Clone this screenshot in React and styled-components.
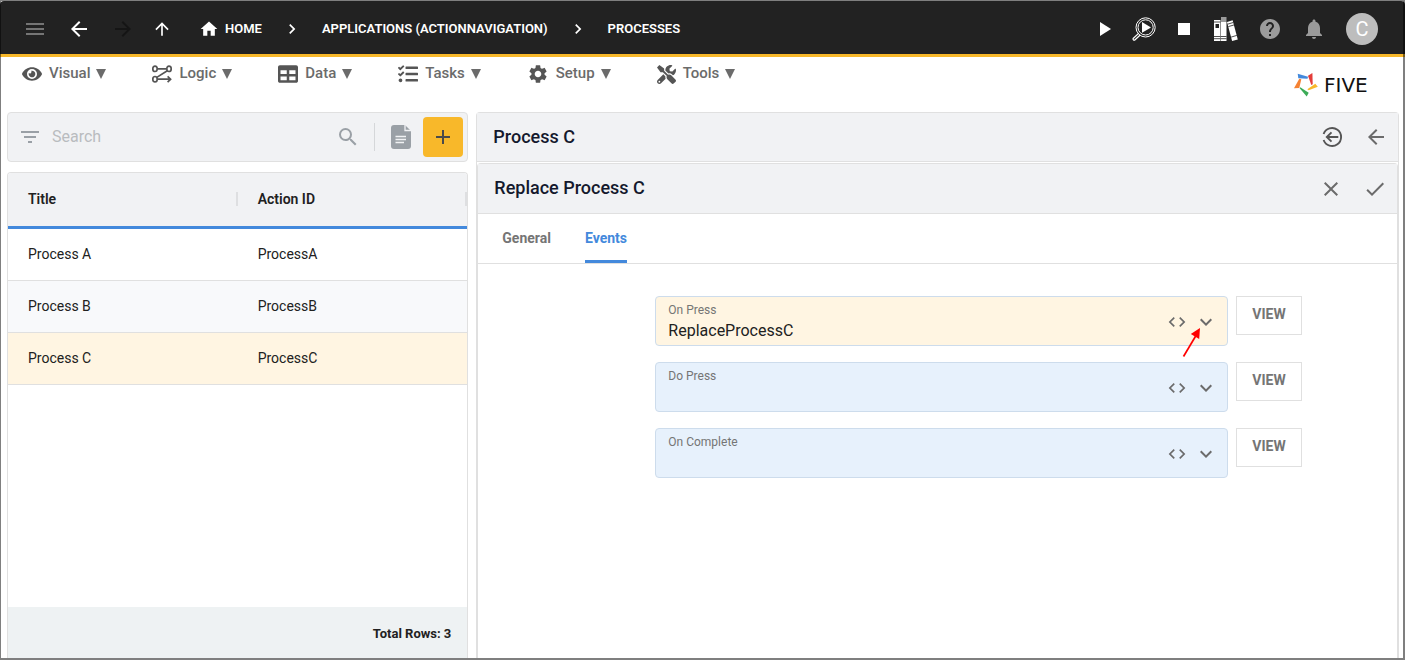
import React, { useState } from 'react';
import styled, { createGlobalStyle } from 'styled-components';
import {
    MdAdd,
    MdArrowBack,
    MdArrowForward,
    MdArrowUpward,
    MdCheck,
    MdChevronRight,
    MdClose,
    MdCode,
    MdExpandMore,
    MdFilterList,
    MdHelp,
    MdHome,
    MdMenu,
    MdNotifications,
    MdPlayArrow,
    MdSearch,
    MdSettings,
    MdStop,
} from 'react-icons/md';
import { FaEye, FaTable, FaTasks, FaTools } from 'react-icons/fa';

const processes = [
    { title: 'Process A', actionId: 'ProcessA' },
    { title: 'Process B', actionId: 'ProcessB' },
    { title: 'Process C', actionId: 'ProcessC' },
];

const events = [
    { id: 'onPress', label: 'On Press', value: 'ReplaceProcessC', pointer: true },
    { id: 'doPress', label: 'Do Press', value: '' },
    { id: 'onComplete', label: 'On Complete', value: '' },
];

const InspectIcon = () => (
    <svg width="24" height="24" viewBox="0 0 24 24" fill="none" stroke="#fff">
        <circle cx="13.6" cy="10.4" r="9.6" strokeWidth="1" />
        <circle cx="13.6" cy="10.4" r="7.6" strokeWidth="1" />
        <path d="M6.6 16.4l-5.2 4.8a1.2 1.2 0 0 0 0 1.6 1.2 1.2 0 0 0 1.7 0l5.1-4.8" strokeWidth="1.2" />
        <path d="M10 5v10.800l9-5.400z" fill="#fff" stroke="none" />
    </svg>
);

const BooksIcon = () => (
    <svg width="26" height="24" viewBox="0 0 26 24">
        <path d="M2 3h6.500v21H2z" fill="#fff" />
        <path d="M3.500 7H7v4H3.500z" fill="#222" />
        <path d="M2 5h6.500M2 19.500h6.500M2 21.700h6.500" stroke="#222" strokeWidth=".8" />
        <path d="M9 0h5.500v5H9z" fill="#9a9a9a" />
        <path d="M9 5h5.500v19H9z" fill="#fff" />
        <path d="M9 19.500h5.500M9 21.700h5.500" stroke="#222" strokeWidth=".8" />
        <path d="M15 5l5.600-1.800 5.200 19.200-5.700 1.600z" fill="#fff" />
        <path d="M15.500 7.200l5.700-1.700M16.300 9.600l5.600-1.600M19.100 20.100l5.700-1.700" stroke="#222" strokeWidth=".8" />
    </svg>
);

const LogicIcon = () => (
    <svg width="20" height="20" viewBox="0 0 20 20" fill="none" stroke="currentColor" strokeWidth="1.7">
        <ellipse cx="3" cy="4.8" rx="2.2" ry="2.7" />
        <ellipse cx="17" cy="4.8" rx="2.2" ry="2.7" />
        <ellipse cx="3" cy="15.2" rx="2.2" ry="2.7" />
        <path d="M5.200 4.800h9.600M15.300 6.700L4.800 13.400M5.200 15.200h13M15.600 12.300l3 2.900-3 2.900" />
    </svg>
);

const DocumentIcon = () => (
    <svg width="20" height="24" viewBox="0 0 20 24">
        <path d="M3 0h11l6 6v15a3 3 0 0 1-3 3H3a3 3 0 0 1-3-3V3a3 3 0 0 1 3-3z" fill="#9aa0a6" />
        <path d="M14 0v5.500h6" fill="none" stroke="#f1f2f4" strokeWidth="1.3" />
        <path d="M4.500 11.500h10.500M4.500 14.500h10.500M4.500 17.500h8.500" stroke="#f1f2f4" strokeWidth="1.3" />
    </svg>
);

const BackCircleIcon = () => (
    <svg width="24" height="24" viewBox="0 0 24 24" fill="none" stroke="#555" strokeWidth="1.9">
        <path d="M3.600 9a9 9 0 1 1 0 6" />
        <path d="M18.300 12H7M11.500 7.400L6.800 12l4.700 4.600" />
    </svg>
);

const StarLogo = () => (
    <svg width="24" height="24" viewBox="0 0 24 24">
        <path d="M3.700.7l.6 4.600 9.200.4.500-2z" fill="#4389dc" />
        <path d="M18.400 0L14 2.700 17.300 12l1.400-.7z" fill="#e43d3a" />
        <path d="M21.300 10.700l2.500 3-9.100 3.600-1.400-1z" fill="#f8b82a" />
        <path d="M6.300 14.300l8.400 5.400-2 3.700-7-8.100z" fill="#3cab57" />
        <path d="M5.300 5.700l2 .6-2 8.700-5.300.3z" fill="#f58233" />
    </svg>
);

const RedPointer = () => (
    <Pointer width="20" height="32" viewBox="0 0 20 32" aria-hidden="true">
        <path d="M1.500 29.500L14 8.500" stroke="#f00" strokeWidth="1.7" />
        <path d="M18 1L17.200 12 8.800 7z" fill="#f00" />
    </Pointer>
);

const menus = [
    { name: 'Visual', icon: <FaEye size={20} /> },
    { name: 'Logic', icon: <LogicIcon /> },
    { name: 'Data', icon: <FaTable size={20} /> },
    { name: 'Tasks', icon: <FaTasks size={20} /> },
    { name: 'Setup', icon: <MdSettings size={22} /> },
    { name: 'Tools', icon: <FaTools size={19} /> },
];

const EventField = ({ event }) => {
    const [value, setValue] = useState(event.value);
    return (
        <EventRow>
            <Field $filled={value !== ''}>
                <FieldText>
                    <FieldLabel htmlFor={event.id}>{event.label}</FieldLabel>
                    <FieldInput id={event.id} value={value} onChange={e => setValue(e.target.value)} />
                </FieldText>
                <IconButton type="button" aria-label="Edit code">
                    <MdCode size={20} />
                </IconButton>
                <IconButton type="button" aria-label="Open list">
                    <MdExpandMore size={24} />
                </IconButton>
                {event.pointer && <RedPointer />}
            </Field>
            <ViewButton type="button">VIEW</ViewButton>
        </EventRow>
    );
};

const App = () => {
    const [selected, setSelected] = useState('ProcessC');
    const [search, setSearch] = useState('');

    return (
        <Page>
            <GlobalStyle />
            <TopBar>
                <NavButtons>
                    <IconButton type="button" aria-label="Menu" $color="#757575"><MdMenu size={24} /></IconButton>
                    <IconButton type="button" aria-label="Back" $color="#fff"><MdArrowBack size={24} /></IconButton>
                    <IconButton type="button" aria-label="Forward" $color="#151515"><MdArrowForward size={24} /></IconButton>
                    <UpButton type="button" aria-label="Up" $color="#fff"><MdArrowUpward size={20} /></UpButton>
                </NavButtons>
                <Crumbs>
                    <Crumb href="#home"><MdHome size={20} />HOME</Crumb>
                    <MdChevronRight size={20} />
                    <Crumb href="#applications">APPLICATIONS (ACTIONNAVIGATION)</Crumb>
                    <MdChevronRight size={20} />
                    <Crumb href="#processes">PROCESSES</Crumb>
                </Crumbs>
                <Actions>
                    <RunButtons>
                        <IconButton type="button" aria-label="Run" $color="#fff"><MdPlayArrow size={24} /></IconButton>
                        <IconButton type="button" aria-label="Inspect"><InspectIcon /></IconButton>
                        <IconButton type="button" aria-label="Stop" $color="#fff"><MdStop size={24} /></IconButton>
                        <IconButton type="button" aria-label="Library"><BooksIcon /></IconButton>
                    </RunButtons>
                    <IconButton type="button" aria-label="Help" $color="#9b9b9b"><MdHelp size={24} /></IconButton>
                    <IconButton type="button" aria-label="Notifications" $color="#9b9b9b"><MdNotifications size={24} /></IconButton>
                    <Avatar type="button">C</Avatar>
                </Actions>
            </TopBar>

            <MenuBar>
                <Menus>
                    {menus.map(menu => (
                        <MenuButton key={menu.name} type="button">
                            {menu.icon}
                            <span>{menu.name}</span>
                            <Caret viewBox="0 0 10 10"><path d="M0 0h10L5 10z" /></Caret>
                        </MenuButton>
                    ))}
                </Menus>
                <Logo>
                    <StarLogo />
                    <Wordmark>FIVE</Wordmark>
                </Logo>
            </MenuBar>

            <Content>
                <ListColumn>
                    <SearchBar>
                        <IconButton type="button" aria-label="Filter" $color="#9aa0a6"><MdFilterList size={24} /></IconButton>
                        <SearchInput
                            type="text"
                            aria-label="Search"
                            placeholder="Search"
                            value={search}
                            onChange={e => setSearch(e.target.value)}
                        />
                        <IconButton type="button" aria-label="Find" $color="#9aa0a6"><MdSearch size={24} /></IconButton>
                        <Divider />
                        <IconButton type="button" aria-label="Report"><DocumentIcon /></IconButton>
                        <AddButton type="button" aria-label="Add"><MdAdd size={24} /></AddButton>
                    </SearchBar>
                    <TablePanel>
                        <Table>
                            <thead>
                                <tr>
                                    <Th><ThInner>Title</ThInner></Th>
                                    <Th><ThInner>Action ID</ThInner></Th>
                                </tr>
                            </thead>
                            <tbody>
                                {processes.map(item => (
                                    <Row
                                        key={item.actionId}
                                        $selected={item.actionId === selected}
                                        onClick={() => setSelected(item.actionId)}
                                    >
                                        <Td>{item.title}</Td>
                                        <Td>{item.actionId}</Td>
                                    </Row>
                                ))}
                            </tbody>
                        </Table>
                        <TableFooter>Total Rows: {processes.length}</TableFooter>
                    </TablePanel>
                </ListColumn>

                <DetailPanel>
                    <PanelHeader>
                        <PanelTitle>Process C</PanelTitle>
                        <PanelActions>
                            <IconButton type="button" aria-label="Return to list"><BackCircleIcon /></IconButton>
                            <IconButton type="button" aria-label="Back"><MdArrowBack size={24} /></IconButton>
                        </PanelActions>
                    </PanelHeader>
                    <InnerPanel>
                        <PanelHeader $inner>
                            <PanelTitle>Replace Process C</PanelTitle>
                            <PanelActions>
                                <IconButton type="button" aria-label="Cancel"><MdClose size={24} /></IconButton>
                                <IconButton type="button" aria-label="Save"><MdCheck size={24} /></IconButton>
                            </PanelActions>
                        </PanelHeader>
                        <Tabs role="tablist">
                            <Tab type="button" role="tab" aria-selected="false">General</Tab>
                            <Tab type="button" role="tab" aria-selected="true" $active>Events</Tab>
                        </Tabs>
                        <Form>
                            {events.map(event => <EventField key={event.id} event={event} />)}
                        </Form>
                    </InnerPanel>
                </DetailPanel>
            </Content>
        </Page>
    );
};

export default App;

const GlobalStyle = createGlobalStyle`
    * {
        box-sizing: border-box;
    }
    body {
        margin: 0;
        background: #fff;
        color: #212121;
        font-family: Roboto, sans-serif;
        font-size: 14px;
    }
    button, input {
        font-family: inherit;
    }
    svg {
        display: block;
        flex-shrink: 0;
    }
`;
const Page = styled.div`
    display: flex;
    flex-direction: column;
    min-height: 100vh;
    padding: 1px 0 2px;
    &::after {
        content: '';
        position: fixed;
        inset: 0;
        border: solid rgba(0, 0, 0, 0.5);
        border-width: 1px 2px 2px 1px;
        pointer-events: none;
    }
`;
const TopBar = styled.header`
    display: flex;
    align-items: center;
    height: 56px;
    padding: 2px 27px 0 23px;
    background: #222222;
    border-bottom: 3px solid #f8b82a;
    border-radius: 4px 4px 0 0;
    color: #fff;
`;
const IconButton = styled.button`
    display: flex;
    flex-shrink: 0;
    padding: 0;
    border: none;
    background: none;
    color: ${props => props.$color || '#6b6b6b'};
    cursor: pointer;
`;
const UpButton = styled(IconButton)`
    margin-left: -3px;
`;
const NavButtons = styled.div`
    display: flex;
    align-items: center;
    gap: 20px;
`;
const Crumbs = styled.nav`
    display: flex;
    align-items: center;
    gap: 20px;
    margin-left: 27px;
`;
const Crumb = styled.a`
    display: flex;
    align-items: center;
    gap: 6px;
    color: #fff;
    font-size: 13px;
    font-weight: 600;
    text-decoration: none;
    white-space: nowrap;
`;
const Actions = styled.div`
    display: flex;
    align-items: center;
    gap: 20px;
    margin-left: auto;
`;
const RunButtons = styled.div`
    display: flex;
    align-items: center;
    gap: 16px;
`;
const Avatar = styled.button`
    width: 32px;
    height: 32px;
    padding: 0;
    border: none;
    border-radius: 50%;
    background: #bdbdbd;
    color: #fff;
    font-size: 20px;
    line-height: 32px;
`;
const MenuBar = styled.div`
    display: flex;
    justify-content: space-between;
    height: 55px;
    padding: 0 24px 0 22px;
`;
const Menus = styled.nav`
    display: flex;
    align-items: center;
    gap: 46px;
    height: 34px;
`;
const MenuButton = styled.button`
    display: flex;
    align-items: center;
    gap: 6px;
    padding: 0;
    border: none;
    background: none;
    color: #555;
    font-size: 15px;
    font-weight: 500;
    cursor: pointer;
    span {
        padding: 0 0 2px 1px;
        color: #6b6b6b;
        line-height: 18px;
    }
`;
const Caret = styled.svg`
    width: 10px;
    height: 10px;
    fill: #6b6b6b;
`;
const Logo = styled.div`
    display: flex;
    align-items: center;
    gap: 6px;
    height: 56px;
`;
const Wordmark = styled.span`
    min-width: 57px;
    color: #111;
    font-family: 'DejaVu Sans', sans-serif;
    font-size: 20px;
    line-height: 24px;
`;
const Content = styled.main`
    display: grid;
    grid-template-columns: 1fr 2fr;
    gap: 8px;
    flex: 1;
    padding: 0 6px 0 7px;
`;
const ListColumn = styled.section`
    display: flex;
    flex-direction: column;
    gap: 10px;
`;
const SearchBar = styled.div`
    display: flex;
    align-items: center;
    height: 50px;
    padding: 0 4px 0 10px;
    border: 1px solid #e0e0e0;
    border-radius: 4px;
    background: #f1f2f4;
`;
const SearchInput = styled.input`
    flex: 1;
    min-width: 0;
    padding: 0 10px 2px;
    border: none;
    outline: none;
    background: none;
    color: #212121;
    font-size: 16px;
    &::placeholder {
        color: #b9bcbf;
    }
`;
const Divider = styled.span`
    width: 1px;
    height: 28px;
    margin: 0 16px 0 14px;
    background: #d5d7d9;
`;
const AddButton = styled.button`
    display: flex;
    align-items: center;
    justify-content: center;
    width: 40px;
    height: 40px;
    margin-left: 12px;
    padding: 0;
    border: none;
    border-radius: 4px;
    background: #f8b82a;
    color: #4a4a4a;
    cursor: pointer;
`;
const TablePanel = styled.div`
    display: flex;
    flex-direction: column;
    flex: 1;
    border: 1px solid #e0e0e0;
    border-bottom: none;
    border-radius: 4px 4px 0 0;
    overflow: hidden;
`;
const Table = styled.table`
    width: 100%;
    border-spacing: 0;
    table-layout: fixed;
`;
const Th = styled.th`
    height: 56px;
    padding: 0 0 2px 20px;
    border-bottom: 3px solid #4389dc;
    background: #f1f2f4;
    text-align: left;
    font-weight: 600;
`;
const ThInner = styled.div`
    border-right: 2px solid #dedfe1;
    line-height: 14px;
`;
const Row = styled.tr`
    background: ${props => (props.$selected ? '#fff5e2' : '#fff')};
    cursor: pointer;
    &:nth-child(even) {
        background: ${props => (props.$selected ? '#fff5e2' : '#f8f9fb')};
    }
`;
const Td = styled.td`
    height: 52px;
    padding: 0 0 2px 20px;
    border-bottom: 1px solid #e0e0e0;
`;
const TableFooter = styled.div`
    display: flex;
    align-items: center;
    justify-content: flex-end;
    height: 51px;
    margin-top: auto;
    padding: 2px 16px 0 0;
    background: #eef2f3;
    font-size: 13px;
    font-weight: 700;
`;
const DetailPanel = styled.section`
    display: flex;
    flex-direction: column;
    border: 1px solid #e0e0e0;
    border-bottom: none;
    border-radius: 4px 4px 0 0;
`;
const PanelHeader = styled.div`
    display: flex;
    align-items: center;
    justify-content: space-between;
    height: ${props => (props.$inner ? '50px' : '49px')};
    padding: 0 10px 0 16px;
    border-bottom: 1px solid #e0e0e0;
    background: #f1f2f4;
`;
const PanelTitle = styled.h2`
    margin: 0;
    padding-bottom: 1px;
    color: #14192d;
    font-size: 18px;
    font-weight: 500;
    line-height: 22px;
`;
const PanelActions = styled.div`
    display: flex;
    align-items: center;
    gap: 20px;
`;
const InnerPanel = styled.div`
    flex: 1;
    margin-top: 1px;
    border: 1px solid #e0e0e0;
    border-bottom: none;
    border-radius: 4px 4px 0 0;
`;
const Tabs = styled.div`
    display: flex;
    gap: 34px;
    height: 50px;
    padding-left: 24px;
    border-bottom: 1px solid #e0e0e0;
`;
const Tab = styled.button`
    padding: 2px 0 0;
    border: none;
    border-bottom: 3px solid ${props => (props.$active ? '#4389dc' : 'transparent')};
    border-radius: 2px 2px 0 0;
    background: none;
    color: ${props => (props.$active ? '#4389dc' : '#757575')};
    font-size: 14px;
    font-weight: 700;
    cursor: pointer;
`;
const Form = styled.form`
    display: flex;
    flex-direction: column;
    gap: 16px;
    padding: 32px 95px 32px 177px;
`;
const EventRow = styled.div`
    display: flex;
    align-items: flex-start;
    gap: 8px;
`;
const Field = styled.div`
    position: relative;
    display: flex;
    flex: 1;
    align-items: center;
    gap: 7px;
    height: 50px;
    padding: 2px 9px 0 12px;
    border: 1px solid #cddcec;
    border-radius: 4px;
    background: ${props => (props.$filled ? '#fff5e2' : '#e7f1fc')};
`;
const FieldText = styled.div`
    display: flex;
    flex: 1;
    flex-direction: column;
    min-width: 0;
    padding-top: 2px;
`;
const FieldLabel = styled.label`
    color: #757575;
    font-size: 12px;
    line-height: 14px;
`;
const FieldInput = styled.input`
    height: 26px;
    padding: 0;
    border: none;
    outline: none;
    background: none;
    color: #212121;
    font-size: 16px;
`;
const Pointer = styled.svg`
    position: absolute;
    top: 30px;
    right: 25px;
`;
const ViewButton = styled.button`
    width: 66px;
    height: 39px;
    padding: 0 0 3px;
    border: 1px solid #e0e0e0;
    background: #fff;
    color: #757575;
    font-size: 14px;
    font-weight: 700;
    cursor: pointer;
`;
